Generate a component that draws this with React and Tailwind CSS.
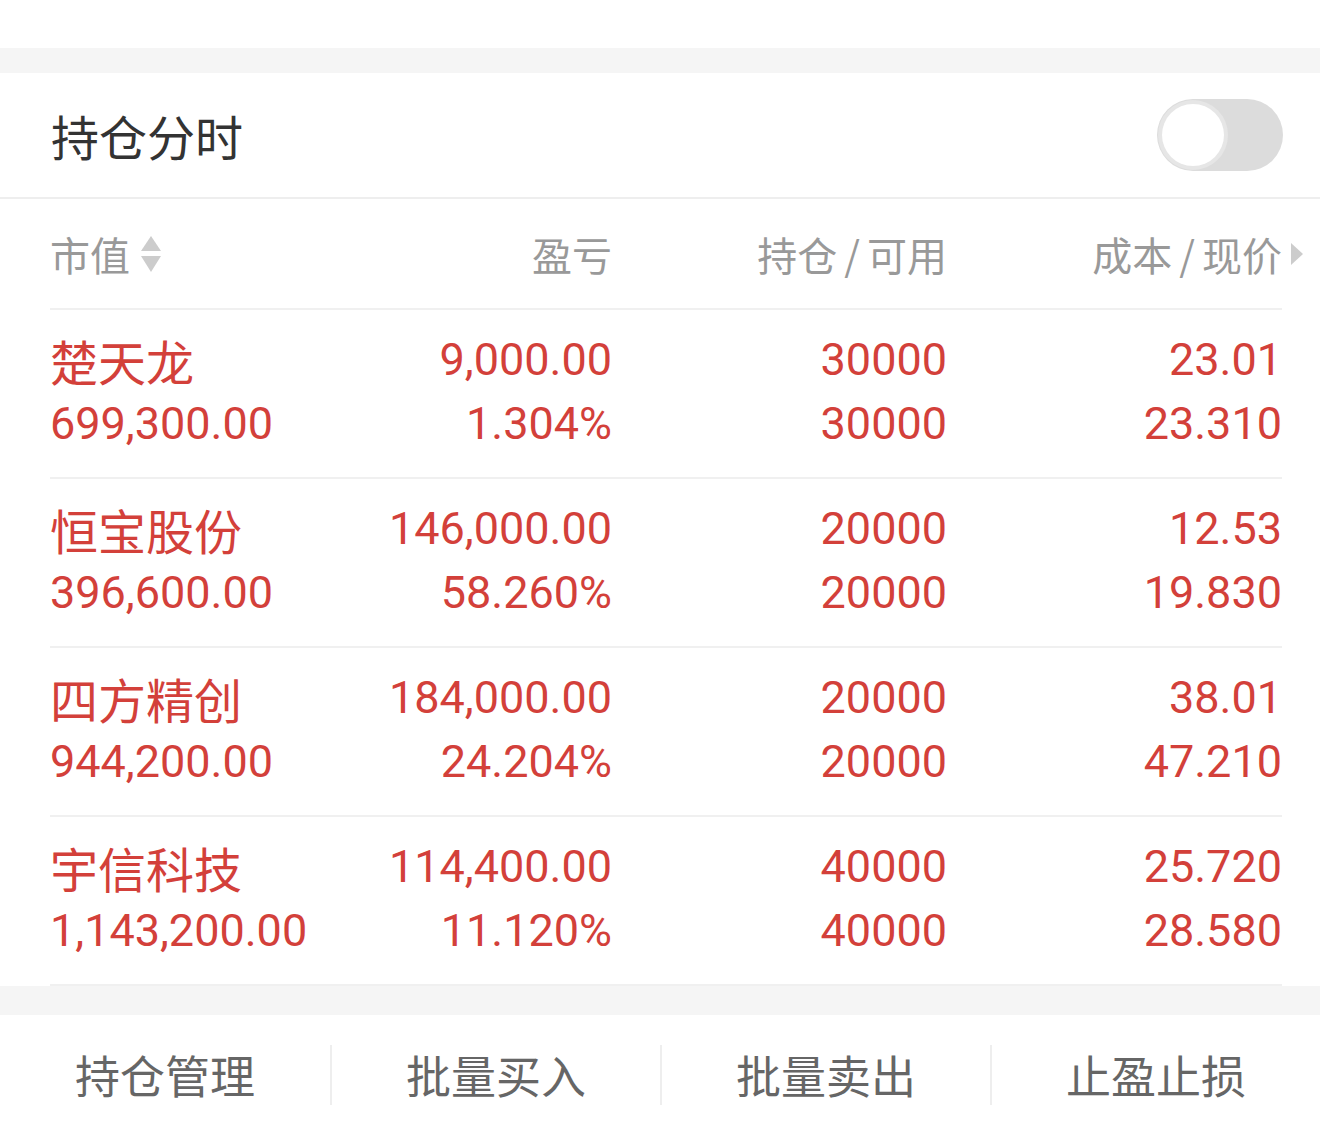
import React from "react";

const RED = "text-[#d3403a]";

const ROWS = [
  { name: "楚天龙", value: "699,300.00", pnl: "9,000.00", pct: "1.304%", hold: "30000", avail: "30000", cost: "23.01", price: "23.310" },
  { name: "恒宝股份", value: "396,600.00", pnl: "146,000.00", pct: "58.260%", hold: "20000", avail: "20000", cost: "12.53", price: "19.830" },
  { name: "四方精创", value: "944,200.00", pnl: "184,000.00", pct: "24.204%", hold: "20000", avail: "20000", cost: "38.01", price: "47.210" },
  { name: "宇信科技", value: "1,143,200.00", pnl: "114,400.00", pct: "11.120%", hold: "40000", avail: "40000", cost: "25.720", price: "28.580" },
];

const ACTIONS = ["持仓管理", "批量买入", "批量卖出", "止盈止损"];

function SortArrows() {
  return (
    <svg width="22" height="40" viewBox="0 0 22 40" className="ml-[10px]">
      <polygon points="11,2 21,17 1,17" fill="#cccccc" />
      <polygon points="1,22 21,22 11,38" fill="#cccccc" />
    </svg>
  );
}

function Cell({ top, bottom, align = "right", topClass = "" }) {
  return (
    <div className={align === "left" ? "text-left" : "text-right"}>
      <div className={`h-[64px] leading-[64px] whitespace-nowrap ${topClass}`}>{top}</div>
      <div className="h-[64px] leading-[64px] whitespace-nowrap">{bottom}</div>
    </div>
  );
}

export default function App() {
  return (
    <div className="w-[1320px] h-[1134px] bg-white font-['Roboto','Noto_Sans_CJK_SC',sans-serif] overflow-hidden">
      <div className="h-[48px] bg-white" />
      <div className="h-[25px] bg-[#f5f5f5]" />

      {/* Header */}
      <div className="h-[126px] flex items-center justify-between pl-[51px] pr-[37px] border-b-2 border-[#eeeeee]">
        <span className="text-[48px] leading-none text-[#333333] font-['Noto_Sans_CJK_SC',sans-serif]">持仓分时</span>
        <div className="w-[126px] h-[72px] rounded-full bg-[#dcdcdc] flex items-center">
          <div className="w-[62px] h-[62px] ml-[5px] rounded-full bg-white shadow-[0_0_0_4px_#e6e6e6]" />
        </div>
      </div>

      {/* Table */}
      <div className="mx-[50px] w-[1232px]">
        <div className="h-[111px] grid grid-cols-[300px_262px_335px_335px] items-center border-b-2 border-[#f0f0f0] text-[40px] text-[#999999] font-['Noto_Sans_CJK_SC',sans-serif]">
          <div className="flex items-center">
            <span>市值</span>
            <SortArrows />
          </div>
          <div className="text-right">盈亏</div>
          <div className="text-right">
            持仓<span className="mx-[7px]">/</span>可用
          </div>
          <div className="flex items-center justify-end">
            <span>
              成本<span className="mx-[7px]">/</span>现价
            </span>
            <svg width="14" height="24" viewBox="0 0 14 24" className="-mr-[22px] ml-[8px]">
              <polygon points="1,1 13,12 1,23" fill="#cccccc" />
            </svg>
          </div>
        </div>

        {ROWS.map((r) => (
          <div
            key={r.name}
            className={`h-[169px] pt-[18px] grid grid-cols-[300px_262px_335px_335px] border-b-2 border-[#f0f0f0] text-[45px] ${RED}`}
          >
            <Cell align="left" top={r.name} bottom={r.value} topClass="text-[48px] font-['Noto_Sans_CJK_SC',sans-serif]" />
            <Cell top={r.pnl} bottom={r.pct} />
            <Cell top={r.hold} bottom={r.avail} />
            <Cell top={r.cost} bottom={r.price} />
          </div>
        ))}
      </div>

      <div className="h-[29px] bg-[#f5f5f5]" />

      {/* Footer actions */}
      <div className="h-[119px] grid grid-cols-4 items-center bg-white">
        {ACTIONS.map((a, i) => (
          <div
            key={a}
            className={`h-[60px] flex items-center justify-center text-[45px] text-[#666666] font-['Noto_Sans_CJK_SC',sans-serif] ${i > 0 ? "border-l-2 border-[#eeeeee]" : ""}`}
          >
            {a}
          </div>
        ))}
      </div>
    </div>
  );
}
